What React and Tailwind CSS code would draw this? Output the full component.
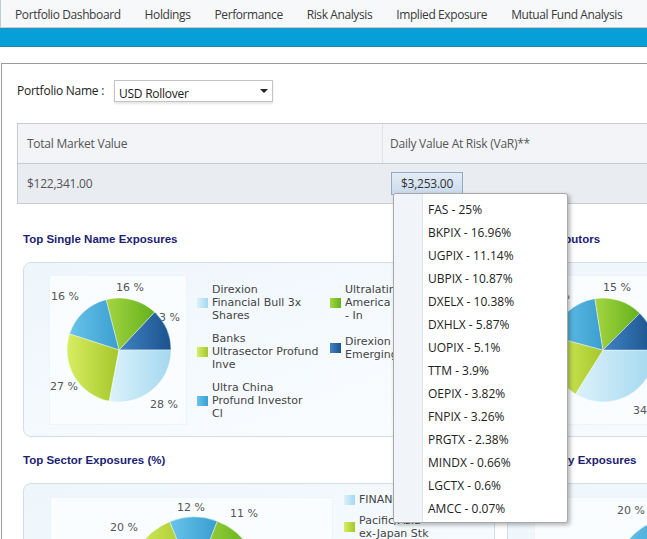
import React from "react";

const tabs = ["Portfolio Dashboard", "Holdings", "Performance", "Risk Analysis", "Implied Exposure", "Mutual Fund Analysis"];

const varItems = [
  "FAS - 25%",
  "BKPIX - 16.96%",
  "UGPIX - 11.14%",
  "UBPIX - 10.87%",
  "DXELX - 10.38%",
  "DXHLX - 5.87%",
  "UOPIX - 5.1%",
  "TTM - 3.9%",
  "OEPIX - 3.82%",
  "FNPIX - 3.26%",
  "PRGTX - 2.38%",
  "MINDX - 0.66%",
  "LGCTX - 0.6%",
  "AMCC - 0.07%",
];

// light -> dark, left to right
const GRAD = {
  lightBlue: ["#dcf2fb", "#a3d8ef"],
  yellowGreen: ["#d8ed62", "#a4c72a"],
  blue: ["#68c4ea", "#3a9ed0"],
  green: ["#a6d442", "#62b21c"],
  darkBlue: ["#4282c4", "#1a538d"],
};

const swatch = {
  lightBlue: "bg-linear-to-r from-[#dcf2fb] to-[#a3d8ef]",
  yellowGreen: "bg-linear-to-r from-[#d8ed62] to-[#a4c72a]",
  blue: "bg-linear-to-r from-[#68c4ea] to-[#3a9ed0]",
  green: "bg-linear-to-r from-[#a6d442] to-[#62b21c]",
  darkBlue: "bg-linear-to-r from-[#4282c4] to-[#1a538d]",
};

function slicePath(cx, cy, r, a0, a1) {
  const rad = (d) => (d * Math.PI) / 180;
  const x1 = cx + r * Math.cos(rad(a0));
  const y1 = cy + r * Math.sin(rad(a0));
  const x2 = cx + r * Math.cos(rad(a1));
  const y2 = cy + r * Math.sin(rad(a1));
  const large = a1 - a0 > 180 ? 1 : 0;
  return `M${cx},${cy} L${x1.toFixed(2)},${y1.toFixed(2)} A${r},${r} 0 ${large} 1 ${x2.toFixed(2)},${y2.toFixed(2)} Z`;
}

function Pie({ id, w, h, cx, cy, r, slices, labels }) {
  return (
    <svg width={w} height={h} className="block overflow-visible">
      <defs>
        {Object.entries(GRAD).map(([k, [a, b]]) => (
          <linearGradient key={k} id={`${id}-${k}`} x1="0" y1="0" x2="1" y2="0">
            <stop offset="0" stopColor={a} />
            <stop offset="1" stopColor={b} />
          </linearGradient>
        ))}
      </defs>
      {labels.map((l, i) => (
        <text
          key={i}
          x={l.x}
          y={l.y}
          dominantBaseline="central"
          fontSize="11"
          fill="#555"
          fontFamily="'DejaVu Sans', sans-serif"
        >
          {l.t}
        </text>
      ))}
      {slices.map((s, i) => (
        <path
          key={i}
          d={slicePath(cx, cy, r, s.a0, s.a1)}
          fill={`url(#${id}-${s.c})`}
          stroke="#ffffff"
          strokeOpacity="0.5"
          strokeWidth="0.8"
        />
      ))}
    </svg>
  );
}

function LegendItem({ color, lines }) {
  return (
    <div className="flex items-center gap-[4px]">
      <div className={`w-[11px] h-[10px] shrink-0 ${swatch[color]}`} />
      <div className="text-[11px] leading-[13px] text-[#444] whitespace-nowrap font-['DejaVu_Sans',sans-serif]">
        {lines.map((ln, i) => (
          <div key={i}>{ln}</div>
        ))}
      </div>
    </div>
  );
}

function Heading({ children }) {
  return (
    <div className="h-[14px] leading-[14px] text-[11.5px] font-bold text-[#1d1d72] whitespace-nowrap font-['Liberation_Sans',Arial,sans-serif]">
      {children}
    </div>
  );
}

function Card({ className, children }) {
  return (
    <div
      className={`rounded-[8px] border border-[#d3dee7] bg-linear-to-br from-[#eef6fc] to-[#fbfdff] ${className}`}
    >
      {children}
    </div>
  );
}

function PlotArea({ w, h, children }) {
  return (
    <div
      className="shrink-0 bg-[#fafdff] border border-[#eef4f8]"
      style={{ width: w, height: h }}
    >
      {children}
    </div>
  );
}

export default function App() {
  return (
    <div className="relative w-[647px] h-[539px] overflow-hidden bg-white font-['Open_Sans',sans-serif]">
      {/* top tabs */}
      <div className="flex h-[28px] items-center border-b border-l border-[#c3cdd5] bg-[#f6f8fa] pl-[2px] pt-[3px] text-[12px] tracking-[-0.4px] text-[#3a3a3a] whitespace-nowrap">
        {tabs.map((t) => (
          <div key={t} className="px-3">
            {t}
          </div>
        ))}
      </div>
      <div className="h-[19px] bg-[#069fd8] border-t border-t-[#2c93bf] border-b border-b-[#1b8aa4]" />

      {/* main panel */}
      <div className="mt-[16px] ml-[1px] w-[760px] border border-[#9b9b9b] pt-[16px] pb-[40px]">
        <div className="flex items-center pl-[15px] h-[22px] tracking-[-0.25px]">
          <div className="w-[97px] text-[12px] text-[#222]">Portfolio Name :</div>
          <div className="relative w-[159px] h-[22px] border border-[#c4c4c4] bg-white shadow-[0_2px_2px_rgba(0,0,0,0.10)] flex items-center pl-[4px]">
            <span className="text-[12px] text-[#222] pt-[5px]">USD Rollover</span>
            <div className="absolute right-[4px] top-[8px] w-0 h-0 border-l-[4px] border-r-[4px] border-t-[4px] border-l-transparent border-r-transparent border-t-[#222]" />
          </div>
        </div>

        {/* summary table */}
        <div className="ml-[15px] mt-[21px] w-[740px] border border-[#c6ccd3] text-[12px] tracking-[-0.25px] text-[#555]">
          <div className="flex h-[40px] border-b border-[#c6ccd3] bg-[#f2f4f8]">
            <div className="w-[365px] border-r border-[#dfe3e8] flex items-center pl-[9px]">
              Total Market Value
            </div>
            <div className="flex items-center pl-[7px]">Daily Value At Risk (VaR)**</div>
          </div>
          <div className="flex h-[39px] bg-[#e9ecf1]">
            <div className="w-[365px] flex items-center pl-[9px]">$122,341.00</div>
            <div className="flex items-center pl-[8px]">
              <div className="h-[23px] w-[72px] border border-[#93aac4] bg-linear-to-b from-[#e2ecf6] to-[#cbdbec] text-[#333] flex items-center justify-center">
                $3,253.00
              </div>
            </div>
          </div>
        </div>

        {/* charts */}
        <div className="pl-[21px] mt-[28px] grid grid-cols-[472px_472px] gap-x-[12px]">
          <div>
            <Heading>Top Single Name Exposures</Heading>
            <Card className="mt-[16px] h-[175px] flex pl-[25px] pt-[12px]">
              <PlotArea w={138} h={150}>
                <Pie
                  id="p1"
                  w={136}
                  h={148}
                  cx={69}
                  cy={74}
                  r={52}
                  labels={[
                    { x: 66, y: 11, t: "16 %" },
                    { x: 1, y: 20, t: "16 %" },
                    { x: 102, y: 41, t: "13 %" },
                    { x: 0, y: 110, t: "27 %" },
                    { x: 100, y: 128, t: "28 %" },
                  ]}
                  slices={[
                    { a0: -46.8, a1: 0, c: "darkBlue" },
                    { a0: -104.4, a1: -46.8, c: "green" },
                    { a0: -162, a1: -104.4, c: "blue" },
                    { a0: -259.2, a1: -162, c: "yellowGreen" },
                    { a0: 0, a1: 100.8, c: "lightBlue" },
                  ]}
                />
              </PlotArea>
              <div className="ml-[10px] mt-[8px] flex">
                <div className="w-[133px] flex flex-col gap-[10px]">
                  <LegendItem color="lightBlue" lines={["Direxion", "Financial Bull 3x", "Shares"]} />
                  <LegendItem color="yellowGreen" lines={["Banks", "Ultrasector Profund", "Inve"]} />
                  <LegendItem color="blue" lines={["Ultra China", "Profund Investor", "Cl"]} />
                </div>
                <div className="flex flex-col gap-[13px]">
                  <LegendItem color="green" lines={["Ultralatin", "America Profund", "- In"]} />
                  <LegendItem color="darkBlue" lines={["Direxion", "Emerging Mkts Bull"]} />
                </div>
              </div>
            </Card>
          </div>

          <div>
            <Heading>Top Contributors</Heading>
            <Card className="mt-[16px] h-[175px] flex pl-[25px] pt-[12px]">
              <PlotArea w={138} h={150}>
                <Pie
                  id="p2"
                  w={136}
                  h={148}
                  cx={69}
                  cy={74}
                  r={52}
                  labels={[
                    { x: 69, y: 11, t: "15 %" },
                    { x: 8, y: 19, t: "18 %" },
                    { x: 99, y: 134, t: "34 %" },
                  ]}
                  slices={[
                    { a0: 0, a1: 122, c: "lightBlue" },
                    { a0: 122, a1: 195, c: "yellowGreen" },
                    { a0: 195, a1: 261, c: "blue" },
                    { a0: 261, a1: 315, c: "green" },
                    { a0: 315, a1: 360, c: "darkBlue" },
                  ]}
                />
              </PlotArea>
            </Card>
          </div>

          <div className="mt-[16px]">
            <Heading>Top Sector Exposures (%)</Heading>
            <Card className="mt-[16px] h-[200px] flex pl-[26px] pt-[13px]">
              <PlotArea w={283} h={170}>
                <Pie
                  id="p3"
                  w={281}
                  h={168}
                  cx={143}
                  cy={84}
                  r={65}
                  labels={[
                    { x: 126, y: 9, t: "12 %" },
                    { x: 179, y: 15, t: "11 %" },
                    { x: 59, y: 29, t: "20 %" },
                  ]}
                  slices={[
                    { a0: -112, a1: -69, c: "blue" },
                    { a0: -69, a1: -29, c: "green" },
                    { a0: -29, a1: 100, c: "lightBlue" },
                    { a0: 100, a1: 176, c: "darkBlue" },
                    { a0: 176, a1: 248, c: "yellowGreen" },
                  ]}
                />
              </PlotArea>
              <div className="ml-[11px] mt-[-4px] flex flex-col gap-[8px]">
                <LegendItem color="lightBlue" lines={["FINANCIALS"]} />
                <LegendItem color="yellowGreen" lines={["Pacific/Asia", "ex-Japan Stk"]} />
              </div>
            </Card>
          </div>

          <div className="mt-[16px]">
            <Heading>Top Country Exposures</Heading>
            <Card className="mt-[16px] h-[200px] flex pl-[26px] pt-[13px]">
              <PlotArea w={283} h={170}>
                <Pie
                  id="p4"
                  w={281}
                  h={168}
                  cx={143}
                  cy={84}
                  r={65}
                  labels={[{ x: 82, y: 12, t: "20 %" }]}
                  slices={[
                    { a0: -160, a1: -88, c: "blue" },
                    { a0: -88, a1: -20, c: "green" },
                    { a0: -20, a1: 110, c: "lightBlue" },
                    { a0: 110, a1: 200, c: "yellowGreen" },
                  ]}
                />
              </PlotArea>
            </Card>
          </div>
        </div>
      </div>

      {/* VaR breakdown popup */}
      <div className="absolute left-[393px] top-[193px] w-[175px] h-[330px] flex rounded-[3px] border border-[#a9a9a9] bg-white shadow-[2px_2px_4px_rgba(0,0,0,0.3)] overflow-hidden">
        <div className="w-[29px] bg-[#f1f4f8] border-r border-[#e1e6ec]" />
        <div className="pt-[4px] pl-[5px] text-[12px] text-[#222]">
          {varItems.map((it) => (
            <div key={it} className="h-[23px] flex items-center whitespace-nowrap">
              {it}
            </div>
          ))}
        </div>
      </div>
    </div>
  );
}
